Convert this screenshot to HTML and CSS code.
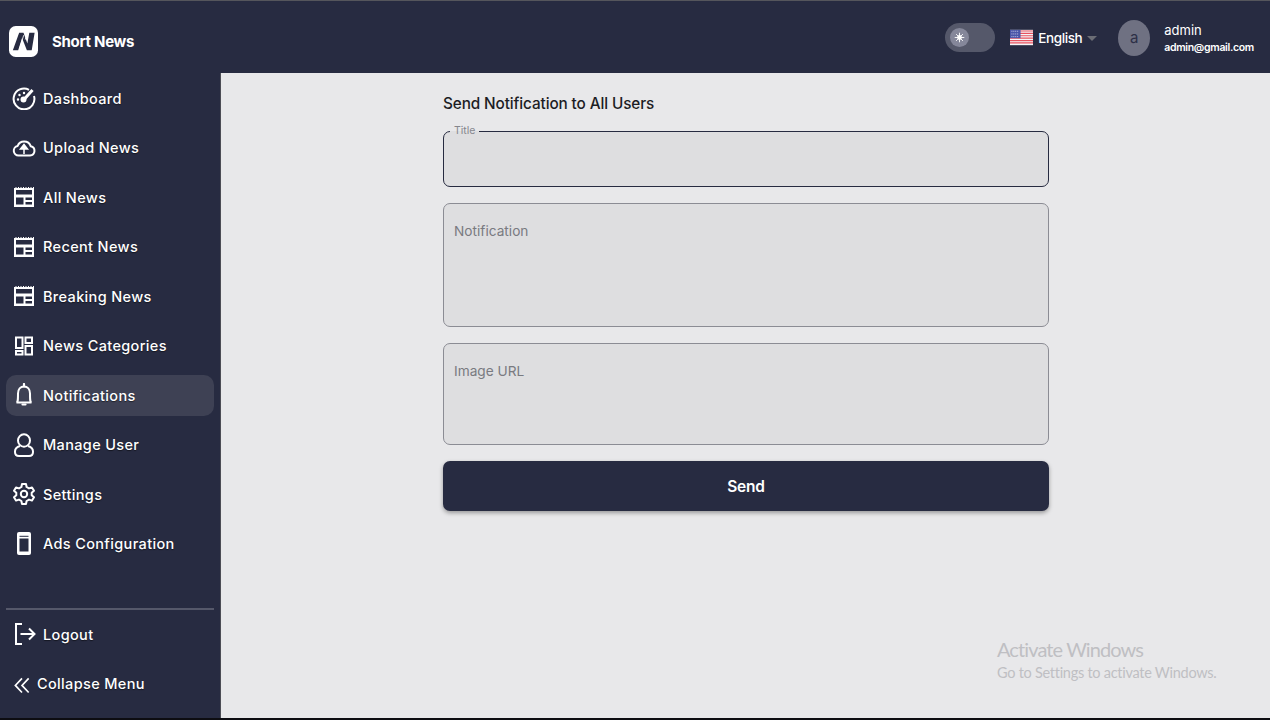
FILE: index.html
```html
<!DOCTYPE html>
<html lang="en">
<head>
    <meta charset="UTF-8">
    <meta name="viewport" content="width=device-width, initial-scale=1.0">
    <title>Short News</title>
    <link rel="stylesheet" href="styles.css">
</head>
<body>
    <header class="topbar">
        <a href="#" class="brand">
            <svg class="logo" viewBox="0 0 30 32">
                <rect width="30" height="32" rx="7" fill="#fff"/>
                <path d="M4 25L10.500 7H15L19 18L21 7H26.500L23.500 25H18.500L13.500 12.500L9.500 25Z" fill="#272b41"/>
                <path d="M10.800 24L15.200 9.500M18.800 8L16.800 14" stroke="#fff" stroke-width=".9" fill="none"/>
            </svg>
            <span class="brand-name">Short News</span>
        </a>
        <div class="topbar-right">
            <div class="theme-toggle">
                <span class="toggle-knob">
                    <svg viewBox="0 0 12 12" class="sun">
                        <circle cx="6" cy="6" r="2.6" fill="#fff"/>
                        <path d="M6 .8V11.2M.8 6H11.2M2.3 2.3L9.7 9.7M9.7 2.3L2.3 9.7" stroke="#fff" stroke-width="1"/>
                    </svg>
                </span>
            </div>
            <div class="lang">
                <svg class="flag" viewBox="0 0 24 16">
                    <rect width="24" height="16" fill="#f5f5f7"/>
                    <path d="M0 1.2H24M0 3.7H24M0 6.2H24M0 8.7H24M0 11.2H24M0 13.7H24" stroke="#e8525f" stroke-width="1.25"/>
                    <rect width="11" height="8.7" fill="#4a55a8"/>
                    <path d="M1.5 1.5h8M1.5 4.3h8M1.5 7.1h8" stroke="#c9cce8" stroke-width="1" stroke-dasharray="1 1"/>
                </svg>
                <span class="lang-name">English</span>
                <span class="caret"></span>
            </div>
            <div class="avatar">a</div>
            <div class="user">
                <span class="user-name">admin</span>
                <span class="user-mail">admin@gmail.com</span>
            </div>
        </div>
    </header>

    <div class="layout">
        <nav class="sidebar">
            <ul class="menu">
                <li class="menu-item">
                    <svg class="icon" viewBox="0 0 24 24"><path d="M17 3.800A10.400 10.400 0 1 0 22 10"/><path d="M12 13.500L20.500 4" stroke-width="3"/><circle cx="11.500" cy="13.500" r="2" fill="#fff"/><path d="M6 13.500h.01M7.500 9h.01M12 7h.01" stroke-width="2.400" stroke-linecap="round"/></svg>
                    Dashboard
                </li>
                <li class="menu-item">
                    <svg class="icon" viewBox="0 0 24 24"><path d="M6.500 19.500A4.800 4.800 0 0 1 5.600 10 7 7 0 0 1 18.700 10.200 4.700 4.700 0 0 1 18 19.500Z"/><path d="M12 18V12M8.500 13L12 8.500 15.500 13Z" fill="#fff" stroke-width="1.500"/></svg>
                    Upload News
                </li>
                <li class="menu-item">
                    <svg class="icon news" viewBox="0 0 24 24"><rect x="2" y="2" width="20" height="20" fill="#fff"/><path d="M2 2.500H22" stroke="#272b41" stroke-width="1" stroke-dasharray="1.500 1"/><path d="M4 5H20V9.500H4ZM4 12.500H11.500V19.500H4ZM13.500 12.500H20V15H13.500ZM13.500 17H20V19.500H13.500Z" fill="#272b41"/></svg>
                    All News
                </li>
                <li class="menu-item">
                    <svg class="icon news" viewBox="0 0 24 24"><rect x="2" y="2" width="20" height="20" fill="#fff"/><path d="M2 2.500H22" stroke="#272b41" stroke-width="1" stroke-dasharray="1.500 1"/><path d="M4 5H20V9.500H4ZM4 12.500H11.500V19.500H4ZM13.500 12.500H20V15H13.500ZM13.500 17H20V19.500H13.500Z" fill="#272b41"/></svg>
                    Recent News
                </li>
                <li class="menu-item">
                    <svg class="icon news" viewBox="0 0 24 24"><rect x="2" y="2" width="20" height="20" fill="#fff"/><path d="M2 2.500H22" stroke="#272b41" stroke-width="1" stroke-dasharray="1.500 1"/><path d="M4 5H20V9.500H4ZM4 12.500H11.500V19.500H4ZM13.500 12.500H20V15H13.500ZM13.500 17H20V19.500H13.500Z" fill="#272b41"/></svg>
                    Breaking News
                </li>
                <li class="menu-item">
                    <svg class="icon" viewBox="0 0 24 24"><path d="M4 3.500H10.500V14H4ZM13.500 3.500H20V9H13.500ZM4 17H10.500V20.500H4ZM13.500 12H20V20.500H13.500Z"/></svg>
                    News Categories
                </li>
                <li class="menu-item active">
                    <svg class="icon" viewBox="0 0 24 24"><path d="M4.500 19.500C6 19 6 17 6 10.500 6 6.500 8.500 3.500 12 3.500S18 6.500 18 10.500C18 17 18 19 19.500 19.500Z"/><path d="M12 1V3.500M10.500 21.500H13.500" stroke-linecap="round" stroke-width="2.200"/></svg>
                    Notifications
                </li>
                <li class="menu-item">
                    <svg class="icon" viewBox="0 0 24 24"><ellipse cx="12" cy="7.500" rx="6" ry="6.200"/><path d="M8 13C4.500 14 3 16 3 18.500V19C3 21.500 4.500 23 7 23H17C19.500 23 21 21.500 21 19V18.500C21 16 19.500 14 16 13"/></svg>
                    Manage User
                </li>
                <li class="menu-item">
                    <svg class="icon" viewBox="0 0 24 24"><circle cx="12" cy="12" r="3.200"/><path d="M10 2H14L14.600 5 17 6.400 20 5.400 22 8.800 19.700 10.800V13.200L22 15.200 20 18.600 17 17.600 14.600 19 14 22H10L9.400 19 7 17.600 4 18.600 2 15.200 4.300 13.200V10.800L2 8.800 4 5.400 7 6.400 9.400 5Z" stroke-linejoin="round"/></svg>
                    Settings
                </li>
                <li class="menu-item">
                    <svg class="icon" viewBox="0 0 24 24"><rect x="5" y="0" width="14" height="23" rx="2" fill="#fff" stroke="none"/><rect x="7.500" y="6.500" width="9" height="13" fill="#272b41" stroke="none"/><path d="M7.500 4.300H16.500" stroke="#272b41" stroke-width="1"/></svg>
                    Ads Configuration
                </li>
            </ul>
            <div class="sidebar-bottom">
                <div class="menu-item">
                    <svg class="icon" viewBox="0 0 24 24"><path d="M10 2H4V22H10"/><path d="M8.500 12H22M17 6.500L22.500 12 17 17.500" stroke-width="2"/></svg>
                    Logout
                </div>
                <div class="menu-item collapse">
                    <svg class="icon" viewBox="0 0 24 24"><path d="M12 4L4 12.500 12 21M20 4L12 12.500 20 21"/></svg>
                    Collapse Menu
                </div>
            </div>
        </nav>

        <main class="content">
            <form class="notify-form" action="#">
                <h1 class="form-title">Send Notification to All Users</h1>
                <fieldset class="field field-focus">
                    <legend>Title</legend>
                    <input type="text" name="title">
                </fieldset>
                <textarea class="field area-notification" name="notification" placeholder="Notification"></textarea>
                <textarea class="field area-image" name="image" placeholder="Image URL"></textarea>
                <button type="submit" class="send-btn">Send</button>
            </form>
            <div class="watermark">
                <div class="wm-title">Activate Windows</div>
                <div class="wm-text">Go to Settings to activate Windows.</div>
            </div>
            <span class="edge-tab"></span>
        </main>
    </div>
</body>
</html>
```

FILE: styles.css
```css
* {
    box-sizing: border-box;
}
html, body {
    height: 100%;
}
body {
    margin: 0;
    font-family: Inter, "Liberation Sans", sans-serif;
    display: flex;
    flex-direction: column;
    height: 720px;
    overflow: hidden;
    background-color: #272b41;
    border-top: 1px solid #55565c;
    border-bottom: 2px solid #0d0d12;
}
.topbar {
    display: flex;
    align-items: center;
    justify-content: space-between;
    height: 72px;
    flex-shrink: 0;
    background-color: #272b41;
    color: white;
}
.brand {
    display: flex;
    align-items: center;
    color: white;
    text-decoration: none;
    padding-left: 9px;
    gap: 14px;
    margin-top: 9px;
}
.logo {
    width: 29px;
    height: 31px;
}
.brand-name {
    font-size: 15px;
    font-weight: 700;
    letter-spacing: -0.3px;
}
.topbar-right {
    display: flex;
    align-items: center;
    padding-right: 16px;
    margin-top: 1px;
}
.theme-toggle {
    width: 50px;
    height: 29px;
    border-radius: 15px;
    background-color: #55586a;
    display: flex;
    align-items: center;
    padding-left: 5px;
    margin-right: 15px;
}
.toggle-knob {
    width: 19px;
    height: 19px;
    border-radius: 50%;
    background-color: #85879a;
    display: flex;
    align-items: center;
    justify-content: center;
}
.sun {
    width: 11px;
    height: 11px;
}
.lang {
    display: flex;
    align-items: center;
    margin-right: 21px;
}
.flag {
    width: 23px;
    height: 17px;
    margin-right: 5px;
}
.lang-name {
    width: 43px;
    font-size: 13.5px;
    font-weight: 500;
    letter-spacing: -0.4px;
    white-space: nowrap;
}
.caret {
    width: 0;
    height: 0;
    margin-left: 6px;
    margin-top: 2px;
    border-left: 5px solid transparent;
    border-right: 5px solid transparent;
    border-top: 5px solid #6b6d75;
}
.avatar {
    width: 32px;
    height: 36px;
    border-radius: 50%;
    background-color: #6f7182;
    color: #2d3047;
    display: flex;
    align-items: center;
    justify-content: center;
    font-size: 15px;
    margin-right: 14px;
}
.user {
    display: flex;
    flex-direction: column;
    gap: 3px;
}
.user-name {
    font-size: 13px;
}
.user-mail {
    font-size: 10.5px;
    font-weight: 600;
    letter-spacing: -0.32px;
}
.layout {
    display: flex;
    flex: 1;
    min-height: 0;
}
.sidebar {
    width: 220px;
    flex-shrink: 0;
    display: flex;
    flex-direction: column;
    padding: 4.5px 6px 0;
    color: white;
}
.menu {
    list-style: none;
    margin: 0;
    padding: 0;
    display: flex;
    flex-direction: column;
    gap: 8.5px;
}
.menu-item {
    display: flex;
    align-items: center;
    height: 41px;
    padding-left: 6px;
    gap: 7px;
    font-size: 14.5px;
    font-weight: 500;
    letter-spacing: 0.35px;
    border-radius: 10px;
    text-shadow: 0 1px 1px rgba(0, 0, 0, .5);
}
.menu-item.active {
    background-color: #3e4154;
}
.icon {
    width: 24px;
    height: 24px;
    flex-shrink: 0;
    fill: none;
    stroke: white;
    stroke-width: 2;
}
.icon.news {
    stroke: none;
}
.sidebar-bottom {
    margin-top: 43.5px;
    border-top: 2px solid #55586a;
    padding-top: 4px;
    display: flex;
    flex-direction: column;
    gap: 8.5px;
}
.collapse {
    gap: 5px;
}
.collapse .icon {
    width: 20px;
    height: 20px;
    margin-top: 3px;
}
.content {
    flex: 1;
    position: relative;
    background-color: #e8e8ea;
    border-left: 1px solid #4c4d55;
    padding: 21px 0 0 222px;
}
.notify-form {
    width: 606px;
    display: flex;
    flex-direction: column;
}
.form-title {
    font-size: 15.3px;
    font-weight: 500;
    line-height: 20px;
    margin: 0 0 17px;
    color: #1c1d24;
    letter-spacing: -0.1px;
}
.field {
    display: block;
    width: 100%;
    margin: 0 0 16px;
    border: 1px solid #8b8c94;
    border-radius: 7px;
    background-color: #dedee0;
    font-family: inherit;
    resize: none;
    outline: none;
}
.field-focus {
    border-color: #272b41;
    height: 61px;
    margin-top: -5px;
    padding: 0 6px;
}
.field-focus legend {
    font-size: 10.5px;
    color: #85868d;
    padding: 0 4px;
    line-height: 10px;
}
.field-focus input {
    border: none;
    background: none;
    width: 100%;
    height: 40px;
    outline: none;
}
textarea.field {
    padding: 19px 10px;
    font-size: 13.7px;
    color: #272b41;
}
textarea.field::placeholder {
    color: #797a80;
    opacity: 1;
}
.area-notification {
    height: 124px;
}
.area-image {
    height: 102px;
}
.send-btn {
    height: 50px;
    border: none;
    border-radius: 7px;
    background-color: #272b41;
    color: white;
    font-family: inherit;
    font-size: 15.5px;
    font-weight: 600;
    letter-spacing: -0.2px;
    box-shadow: 0 2px 4px rgba(0, 0, 0, .35);
    cursor: pointer;
}
.watermark {
    position: absolute;
    left: 776px;
    top: 563px;
    color: #bfbfc3;
    font-family: Lato, sans-serif;
}
.wm-title {
    font-size: 20px;
    line-height: 26px;
    letter-spacing: -0.9px;
}
.wm-text {
    font-size: 14.5px;
    line-height: 20px;
    letter-spacing: -0.27px;
    margin-top: 1px;
}
.edge-tab {
    position: absolute;
    left: 52px;
    bottom: -2px;
    width: 34px;
    height: 2px;
    background-color: #55565c;
}
```
